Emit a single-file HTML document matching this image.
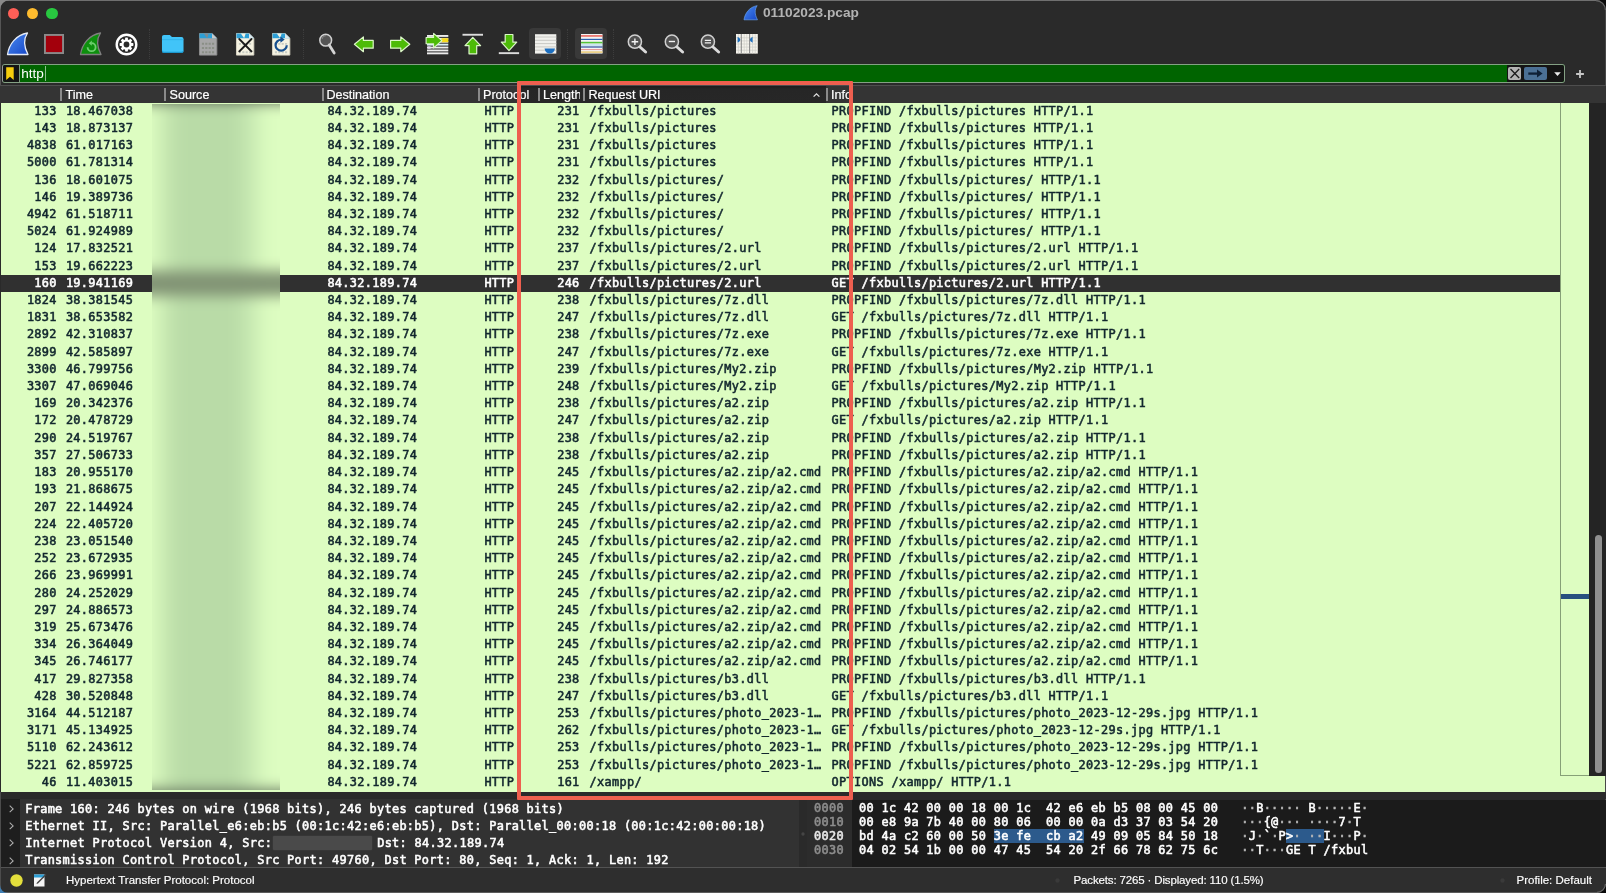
<!DOCTYPE html>
<html lang="en"><head><meta charset="utf-8"><title>01102023.pcap</title>
<style>
html,body{margin:0;padding:0;background:#2a2a2a;}
body{width:1606px;height:893px;overflow:hidden;position:relative;font-family:"Liberation Sans",sans-serif;}
#win{filter:contrast(1);position:absolute;left:0;top:0;width:1606px;height:893px;background:#2a2a2a;overflow:hidden;}
#win *{box-sizing:border-box;}
.abs{position:absolute;}
#topline{position:absolute;left:0;top:0;width:1606px;height:1.2px;background:#707070;}
.tl{position:absolute;top:7.6px;width:11.6px;height:11.6px;border-radius:50%;}
#ledge{position:absolute;left:0;top:0;width:1px;height:102px;background:#555;}
#redge{position:absolute;left:1605px;top:0;width:1px;height:893px;background:#484848;}
.corner{position:absolute;width:10px;height:10px;}
#title{position:absolute;left:763px;top:4.1px;font-size:13.7px;font-weight:bold;color:#b3b3b3;line-height:17px;white-space:nowrap;}
.tsep{position:absolute;top:29px;width:0;height:30px;border-left:1px dotted #3d3d3d;}
.tbtn{position:absolute;top:28.2px;height:31px;border-radius:4px;background:#393939;}
svg{position:absolute;overflow:visible;}
#filter{position:absolute;left:2px;top:64px;width:1563px;height:19px;border:1px solid #84a084;border-left-color:#9a9a9a;border-radius:3px;background:#006400;overflow:hidden;}
#filter .bm{position:absolute;left:0;top:0;width:16px;height:17px;background:#141414;}
#filter .bmsep{position:absolute;left:16px;top:0;width:1px;height:17px;background:#7b9a7b;}
#filter .txt{position:absolute;left:18.2px;top:0;font-size:13.6px;line-height:17px;color:#fff;}
#filter .caret{position:absolute;left:42.3px;top:1px;width:1px;height:15px;background:#8fbf8f;}
#filter .rt{position:absolute;left:1503.5px;top:0;width:60px;height:17px;background:#141414;}
#fx{position:absolute;left:1507.5px;top:67px;width:13.5px;height:13px;background:#b4b4b4;border-radius:2px;}
#fa{position:absolute;left:1523.5px;top:67px;width:23.5px;height:13px;background:#4b7095;border-radius:2px;}
#hline{position:absolute;left:0;top:84.6px;width:1606px;height:1px;background:#4e4e4e;}
#hline2{position:absolute;left:0;top:85.6px;width:1606px;height:1px;background:#1e1e1e;}
#hdr{position:absolute;left:0;top:86px;width:1606px;height:16.8px;background:#343434;color:#fff;font-size:12.6px;}
#hdr .h{-webkit-text-stroke:0.2px;position:absolute;top:0.6px;line-height:16.5px;white-space:nowrap;}
#hdr .s{position:absolute;top:2.2px;width:1.15px;height:12.5px;background:#8a8a8a;margin-left:.4px;}
#list{-webkit-text-stroke:0.55px;position:absolute;left:1px;top:102.8px;width:1604.2px;height:688.8px;background:#ddfdc1;overflow:hidden;font-family:"DejaVu Sans Mono","Liberation Mono",monospace;font-size:11.9px;letter-spacing:0.325px;color:#12272e;}
.r{position:absolute;left:0;width:1559px;height:17.19px;line-height:17.6px;white-space:pre;}
.r.sel{background:#303030;color:#fff;height:17.3px;}
.c{position:absolute;top:0;}
.no{right:1503.2px;}
.tm{left:64.9px;}
.ds{left:326.4px;}
.pr{left:483.4px;}
.ln{right:980.4px;}
.ur{left:588.6px;}
.in{left:830.6px;}
#blur{position:absolute;left:151px;top:1.2px;width:128px;height:685.6px;overflow:hidden;background:#ddfdc1;}
#blur .bi{position:absolute;left:-40px;top:-40px;width:208px;height:766px;background:linear-gradient(90deg,#ddfdc1 38px,#d2f3b9 46px,#c2e3ad 58px,#b9dba7 70px,#b9dba7 122px,#c6e8b1 137px,#d6f7bc 150px,#ddfdc1 160px);filter:blur(7px);}
#blur .bi div{position:absolute;}
#blur .el{position:absolute;top:0;left:0;width:10px;height:100%;background:linear-gradient(90deg,rgba(224,255,197,.25),rgba(224,255,197,0));}
#blur .er{position:absolute;top:0;right:0;width:14px;height:100%;background:linear-gradient(270deg,rgba(224,255,197,.35),rgba(224,255,197,0));}
#mmline{position:absolute;left:1560.2px;top:102.8px;width:29.3px;height:673.2px;border-left:1px solid #86a077;border-bottom:1px solid #86a077;}
#mmmark{position:absolute;left:1561px;top:593.6px;width:28.5px;height:5.2px;background:#27507f;}
#sbtrack{position:absolute;left:1589.3px;top:102.8px;width:16.7px;height:672.8px;background:#242424;}
#sbthumb{position:absolute;left:1594.5px;top:535.3px;width:7.5px;height:238px;border-radius:3.75px;background:#909090;}
#gap{position:absolute;left:0;top:791.6px;width:1606px;height:7.6px;background:#2a2a2a;}
#det{-webkit-text-stroke:0.55px;position:absolute;left:1px;top:799px;width:797.5px;height:67.5px;background:#323232;overflow:hidden;font-family:"DejaVu Sans Mono","Liberation Mono",monospace;font-size:11.9px;letter-spacing:0.325px;color:#fff;}
#det .gut{position:absolute;left:0;top:0;width:18.5px;height:68px;background:#1e1e1e;}
#det .l{position:absolute;left:24.2px;white-space:pre;line-height:17.2px;height:17.2px;}
#det .a{position:absolute;left:7px;color:#bdbdbd;line-height:17.2px;}
#hex{-webkit-text-stroke:0.55px;position:absolute;left:806.5px;top:799.5px;width:799.5px;height:67.5px;background:#1b1b1b;overflow:hidden;font-family:"DejaVu Sans Mono","Liberation Mono",monospace;font-size:11.9px;letter-spacing:0.325px;color:#fff;}
#hex .off{position:absolute;left:0;top:0;width:45px;height:68px;background:#2c2c2c;}
#hex .l{position:absolute;white-space:pre;line-height:14.3px;height:14.3px;}
#hex .o{left:7.5px;color:#8e8e8e;}
#hex .b{left:52.5px;}
#hex .t{left:434.7px;}
#hex i{font-style:normal;color:#b8b8b8;}
#hex .hl{background:#2c5a8c;}
#sline{position:absolute;left:0;top:866.9px;width:1606px;height:1.1px;background:#535353;}
#bline{position:absolute;left:0;top:892px;width:1606px;height:1px;background:#5c5c5c;}
#ledge2{position:absolute;left:0;top:792px;width:1px;height:101px;background:#4c4c4c;}
#status{position:absolute;left:0;top:868px;width:1606px;height:25px;background:#2e2e2e;color:#fff;font-size:11.5px;}
#status .t{-webkit-text-stroke:0.15px;position:absolute;top:0;line-height:25px;white-space:nowrap;}
#redbox{position:absolute;left:517px;top:81.3px;width:336px;height:718.7px;border:4.8px solid #ee5f4f;border-radius:1px;}
#hdark{position:absolute;left:521px;top:0;width:305px;height:16.8px;background:linear-gradient(180deg,#1c1c1c 0,#262626 3px,#272727 100%);}

</style></head><body>
<div id="win">
<div id="topline"></div><div id="ledge"></div><div id="redge"></div>
<svg style="left:1596px;top:0" width="10" height="10" viewBox="0 0 10 10"><path d="M0 0 H10 V10 A10 10 0 0 0 0 0 Z" fill="#0c0c0c"/><path d="M0 0.6 A9.4 9.4 0 0 1 9.4 10" fill="none" stroke="#666" stroke-width="1.2"/></svg>
<svg style="left:0;top:0" width="10" height="10" viewBox="0 0 10 10"><path d="M10 0 H0 V10 A10 10 0 0 1 10 0 Z" fill="#8a8a8a"/></svg>
<div class="tl" style="left:7.6px;background:#ff5f57"></div>
<div class="tl" style="left:26.9px;background:#febc2e"></div>
<div class="tl" style="left:46.2px;background:#28c840"></div>
<svg style="left:742.9px;top:4.6px" width="15.8" height="15.8" viewBox="0 0 24 24"><defs><linearGradient id="gb" x1="0" y1="0" x2="1" y2="1"><stop offset="0" stop-color="#4a8cf0"/><stop offset="1" stop-color="#1747c8"/></linearGradient></defs><path d="M1.5 22.5 C3 12 10 3 21.5 1 C17.5 7 17.5 14 22 22.5 Z" fill="url(#gb)" stroke="#6aa5f5" stroke-width="1"/></svg>
<div id="title">01102023.pcap</div>

<!-- toolbar -->
<svg style="left:6px;top:32px" width="24" height="24" viewBox="0 0 24 24"><path d="M1.5 22.5 C3 12 10 3 21.5 1 C17.5 7 17.5 14 22 22.5 Z" fill="url(#gb)" stroke="#e6ecf7" stroke-width="1.3" stroke-linejoin="round"/></svg>
<svg style="left:44px;top:34px" width="20" height="20" viewBox="0 0 21 21"><rect x="1" y="1" width="19" height="19" fill="#a3000c" stroke="#8a8a8a" stroke-width="2"/></svg>
<svg style="left:79px;top:32px" width="24" height="24" viewBox="0 0 24 24"><path d="M1.5 22.5 C3 12 10 3 21.5 1 C17.5 7 17.5 14 22 22.5 Z" fill="#0d8f0d" stroke="#808080" stroke-width="1.3" stroke-linejoin="round"/><path d="M8.6 15.2 a4 4 0 1 0 4 -4" fill="none" stroke="#6fce6f" stroke-width="1.8"/><path d="M12.8 8.6 l-3 2.6 l3 2.6 z" fill="#6fce6f"/></svg>
<svg style="left:115px;top:33px" width="23" height="23" viewBox="0 0 23 23"><circle cx="11.5" cy="11.5" r="9.8" fill="none" stroke="#fff" stroke-width="2.4"/><g fill="#fff"><circle cx="11.5" cy="11.5" r="5.2"/><g id="teeth"><rect x="10.1" y="4.6" width="2.8" height="13.8" rx="0.6"/><rect x="10.1" y="4.6" width="2.8" height="13.8" rx="0.6" transform="rotate(45 11.5 11.5)"/><rect x="10.1" y="4.6" width="2.8" height="13.8" rx="0.6" transform="rotate(90 11.5 11.5)"/><rect x="10.1" y="4.6" width="2.8" height="13.8" rx="0.6" transform="rotate(135 11.5 11.5)"/></g></g><circle cx="11.5" cy="11.5" r="2.9" fill="#2a2a2a"/></svg>
<div class="tsep" style="left:149px"></div>
<svg style="left:160.7px;top:33.8px" width="23.5" height="19.8" viewBox="0 0 24 21" preserveAspectRatio="none"><path d="M1 3 a2 2 0 0 1 2 -2 h6 l2.2 2.3 H21 a2 2 0 0 1 2 2 V18 a2 2 0 0 1 -2 2 H3 a2 2 0 0 1 -2 -2 Z" fill="#41c4f8"/><path d="M1 17 v1 a2 2 0 0 0 2 2 h18 a2 2 0 0 0 2 -2 v-1 a2 2 0 0 1 -2 1.7 H3 a2 2 0 0 1 -2 -1.7z" fill="#1596cf"/><path d="M1 6 h22" stroke="#2aaee6" stroke-width="0.8"/></svg>
<svg style="left:199.4px;top:32.5px" width="18.3" height="22.6" viewBox="0 0 19 24" preserveAspectRatio="none"><path d="M0.5 0.5 H13.5 L18.5 5.5 V23.5 H0.5 Z" fill="#a6a6a6" stroke="#8d8d8d"/><path d="M0.5 0.5 H13.5 L18.5 5.5 H0.5 Z" fill="#2d9fd6"/><path d="M5 0.5 L8.5 5.5 L10 0.5z" fill="#7f8a90"/><path d="M13.5 0.5 V5.5 H18.5 Z" fill="#c9c9c9"/><g stroke="#8a8f86" stroke-width="2.2" stroke-dasharray="2.2 1.3"><path d="M3 11.5 H16"/><path d="M3 16 H16"/><path d="M3 20.5 H16"/></g></svg>
<svg style="left:235.6px;top:32.5px" width="18.3" height="22.6" viewBox="0 0 19 24" preserveAspectRatio="none"><path d="M0.5 0.5 H13.5 L18.5 5.5 V23.5 H0.5 Z" fill="#f6f3e2" stroke="#d8d5c4"/><path d="M0.5 0.5 H13.5 L18.5 5.5 H0.5 Z" fill="#2d9fd6"/><path d="M5 0.5 L8.5 5.5 L10 0.5z" fill="#f6f3e2"/><path d="M13.5 0.5 V5.5 H18.5 Z" fill="#dfe9ee"/><g stroke="#c9cdc4" stroke-width="2" stroke-dasharray="2.2 1.3"><path d="M3 11.5 H16"/><path d="M3 20.5 H16"/></g><path d="M3.5 6.5 L16 19.5 M16 6.5 L3.5 19.5" stroke="#1b1b1b" stroke-width="2.2" stroke-linecap="round"/></svg>
<svg style="left:272.2px;top:32.5px" width="18.3" height="22.6" viewBox="0 0 19 24" preserveAspectRatio="none"><path d="M0.5 0.5 H13.5 L18.5 5.5 V23.5 H0.5 Z" fill="#f6f3e2" stroke="#d8d5c4"/><path d="M0.5 0.5 H13.5 L18.5 5.5 H0.5 Z" fill="#2d9fd6"/><path d="M5 0.5 L8.5 5.5 L10 0.5z" fill="#f6f3e2"/><path d="M13.5 0.5 V5.5 H18.5 Z" fill="#dfe9ee"/><g stroke="#c9cdc4" stroke-width="2" stroke-dasharray="2.2 1.3"><path d="M3 11.5 H16"/><path d="M3 20.5 H16"/></g><path d="M9.5 7.2 A5.8 5.8 0 1 0 15.3 13" fill="none" stroke="#17508f" stroke-width="2.3"/><path d="M8.6 3.8 L13.2 7 L8.8 10.4 Z" fill="#17508f"/></svg>
<div class="tsep" style="left:303px"></div>
<svg style="left:316px;top:31px" width="24" height="26" viewBox="0 0 24 26"><circle cx="9.7" cy="9.2" r="5.9" fill="#555" stroke="#d0d0d0" stroke-width="1.5"/><path d="M6 8 a4 4 0 0 1 4 -3.4" fill="none" stroke="#8a8a8a" stroke-width="1"/><path d="M13.2 14 L18.2 22" stroke="#d4d4d4" stroke-width="2.8" stroke-linecap="round"/></svg>
<svg style="left:353px;top:34.5px" width="22" height="19" viewBox="0 0 22 19"><path d="M1.4 9.3 L10.4 1.9 V5.4 H20.2 V13.2 H10.4 V16.7 Z" fill="#4dbb08" stroke="#dcf7c8" stroke-width="1.2" stroke-linejoin="round"/></svg>
<svg style="left:389px;top:34.5px" width="22" height="19" viewBox="0 0 22 19"><path d="M20.8 9.3 L11.8 1.9 V5.4 H1.6 V13.2 H11.8 V16.7 Z" fill="#4dbb08" stroke="#dcf7c8" stroke-width="1.2" stroke-linejoin="round"/></svg>
<svg style="left:425px;top:32px" width="24" height="24" viewBox="0 0 24 24"><g fill="#ececec"><rect x="2" y="3" width="21.3" height="1.9"/><rect x="2" y="5.9" width="21.3" height="1.9"/><rect x="2" y="8.8" width="21.3" height="1.9"/><rect x="2" y="11.7" width="21.3" height="1.9" fill="#d9f0f8"/><rect x="2" y="14.6" width="21.3" height="1.9"/><rect x="2" y="17.5" width="21.3" height="1.9"/><rect x="2" y="20.4" width="21.3" height="1.9"/></g><rect x="2.6" y="14.4" width="3" height="2.3" fill="#e8dcf5"/><rect x="16.5" y="6.2" width="6.8" height="4" fill="#f7da1c"/><path d="M16.9 8.6 L8.6 1.4 V5.5 H1.1 V11.8 H8.6 V15.9 Z" fill="#4dbb08" stroke="#dcf7c8" stroke-width="1.1" stroke-linejoin="round"/></svg>
<svg style="left:461px;top:32px" width="24" height="24" viewBox="0 0 24 24"><rect x="1.5" y="1.8" width="20.5" height="1.9" fill="#dcdcdc"/><path d="M11.8 5.4 L19.6 13.6 H15.7 V21.8 H8 V13.6 H4 Z" fill="#4dbb08" stroke="#dcf7c8" stroke-width="1.2" stroke-linejoin="round"/></svg>
<svg style="left:497px;top:32px" width="24" height="24" viewBox="0 0 24 24"><rect x="1.8" y="20.2" width="20.3" height="1.9" fill="#dcdcdc"/><path d="M12 18.6 L19.7 10.2 H15.9 V2.5 H8.2 V10.2 H4.3 Z" fill="#4dbb08" stroke="#dcf7c8" stroke-width="1.2" stroke-linejoin="round"/></svg>
<div class="tbtn" style="left:529.2px;width:32px"></div>
<svg style="left:535px;top:34px" width="22" height="20" viewBox="0 0 22 20"><rect x="0" y="0.2" width="21.3" height="19.4" fill="#f1f1ed"/><path d="M0 3H21.3M0 6.3H21.3M0 9.6H21.3M0 12.9H21.3M0 16.2H21.3" stroke="#c4c4c0" stroke-width="0.9"/><path d="M9.5 14.6 H20 Q19 19.6 14.8 19.6 Q10.5 19.6 9.5 14.6 Z" fill="#1c6fc0"/></svg>
<div class="tsep" style="left:567px"></div>
<div class="tbtn" style="left:575.2px;width:32px"></div>
<svg style="left:581px;top:34px" width="22" height="20" viewBox="0 0 22 20"><rect x="0" y="0" width="21.5" height="19.6" fill="#f4f4f4"/><rect x="0" y="1.3" width="21.5" height="1.3" fill="#e8493f"/><rect x="0" y="4.8" width="21.5" height="1.2" fill="#2c5fb0"/><rect x="0" y="7.8" width="21.5" height="1.6" fill="#53c23a"/><rect x="0" y="10.5" width="21.5" height="1" fill="#9fd8f0"/><rect x="0" y="12.4" width="21.5" height="1.2" fill="#2a4f9c"/><rect x="0" y="15" width="21.5" height="1.1" fill="#e79a9a"/><rect x="0" y="17.2" width="21.5" height="1.8" fill="#ecd28a"/></svg>
<div class="tsep" style="left:613px"></div>
<svg style="left:625px;top:31px" width="26" height="26" viewBox="0 0 26 26"><circle cx="9.9" cy="10.7" r="6.6" fill="#505050" stroke="#d0d0d0" stroke-width="1.5"/><path d="M6.6 10.7 H13.2 M9.9 7.4 V14" stroke="#f2f2f2" stroke-width="1.4"/><path d="M15 16 L20.6 21" stroke="#dadada" stroke-width="3" stroke-linecap="round"/></svg>
<svg style="left:661.5px;top:31px" width="26" height="26" viewBox="0 0 26 26"><circle cx="9.9" cy="10.7" r="6.6" fill="#505050" stroke="#d0d0d0" stroke-width="1.5"/><path d="M6.8 10.5 H13" stroke="#f2f2f2" stroke-width="1.4"/><path d="M15 16 L20.6 21" stroke="#dadada" stroke-width="3" stroke-linecap="round"/></svg>
<svg style="left:698px;top:31px" width="26" height="26" viewBox="0 0 26 26"><circle cx="9.9" cy="10.7" r="6.6" fill="#505050" stroke="#d0d0d0" stroke-width="1.5"/><path d="M6.8 9.4 H13 M6.8 11.9 H13" stroke="#f2f2f2" stroke-width="1.2"/><path d="M15 16 L20.6 21" stroke="#dadada" stroke-width="3" stroke-linecap="round"/></svg>
<svg style="left:736px;top:34px" width="22" height="20" viewBox="0 0 22 20"><rect x="0" y="0" width="21.8" height="19.6" fill="#f5f3ec"/><g stroke="#cfcfc8" stroke-width="0.7"><path d="M0 3.8H22M0 6.9H22M0 10H22M0 13.1H22M0 16.2H22"/><path d="M2.4 0V19.6M8.2 0V19.6M10.8 0V19.6M16.6 0V19.6M19.2 0V19.6"/></g><path d="M5.3 0V19.6M13.6 0V19.6" stroke="#8c8c8c" stroke-width="1.1"/><path d="M1.6 2.8 Q7.2 5.8 1.6 8.8Z M16.6 2.8 Q11 5.8 16.6 8.8Z" fill="#1e6fbe"/></svg>

<!-- filter bar -->
<div id="filter"><div class="bm"></div><div class="bmsep"></div><div class="txt">http</div><div class="caret"></div><div class="rt"></div></div>
<svg style="left:6px;top:67px" width="8" height="13.5" viewBox="0 0 8 13.5"><path d="M0.2 0.2 H7.7 V13 L4 9.8 L0.2 13 Z" fill="#f7cd0c"/></svg>
<div id="fx"></div>
<svg style="left:1507.5px;top:67px" width="14" height="13" viewBox="0 0 14 13"><path d="M2.5 2 L11.2 11 M11.2 2 L2.5 11" stroke="#1c1c1c" stroke-width="1.3"/></svg>
<div id="fa"></div>
<svg style="left:1523.5px;top:67px" width="24" height="13" viewBox="0 0 24 13"><path d="M4.3 6.6 H14" stroke="#0f2036" stroke-width="2.3"/><path d="M13 2.6 L18.6 6.6 L13 10.6 Z" fill="#0f2036"/></svg>
<svg style="left:1553.5px;top:72px" width="7" height="4" viewBox="0 0 7 4"><path d="M0.2 0.2 H6.8 L3.5 3.9 Z" fill="#ececec"/></svg>
<svg style="left:1575.8px;top:70px" width="8" height="8" viewBox="0 0 8 8"><path d="M4 0.1 V7.9 M0.1 4 H7.9" stroke="#c6c6c6" stroke-width="1.8"/></svg>
<div id="hline"></div><div id="hline2"></div>

<!-- header -->
<div id="hdr">
<div id="hdark"></div>
<div class="s" style="left:60px"></div><div class="h" style="left:65.5px">Time</div>
<div class="s" style="left:164px"></div><div class="h" style="left:169.5px">Source</div>
<div class="s" style="left:322px"></div><div class="h" style="left:326.4px">Destination</div>
<div class="s" style="left:478px"></div><div class="h" style="left:483px">Protocol</div>
<div class="s" style="left:538px"></div><div class="h" style="left:543px;width:37px;overflow:hidden">Length</div>
<div class="s" style="left:583px"></div><div class="h" style="left:588.5px">Request URI</div>
<svg style="left:812.5px;top:6.5px" width="7" height="4" viewBox="0 0 7 4"><path d="M0.6 3.6 L3.5 0.8 L6.4 3.6" fill="none" stroke="#e0e0e0" stroke-width="1.3"/></svg>
<div class="s" style="left:826px"></div><div class="h" style="left:831px">Info</div>
</div>
<div id="list">
<div class="r" style="top:0.00px"><span class="c no">133</span><span class="c tm">18.467038</span><span class="c ds">84.32.189.74</span><span class="c pr">HTTP</span><span class="c ln">231</span><span class="c ur">/fxbulls/pictures</span><span class="c in">PROPFIND /fxbulls/pictures HTTP/1.1</span></div>
<div class="r" style="top:17.20px"><span class="c no">143</span><span class="c tm">18.873137</span><span class="c ds">84.32.189.74</span><span class="c pr">HTTP</span><span class="c ln">231</span><span class="c ur">/fxbulls/pictures</span><span class="c in">PROPFIND /fxbulls/pictures HTTP/1.1</span></div>
<div class="r" style="top:34.41px"><span class="c no">4838</span><span class="c tm">61.017163</span><span class="c ds">84.32.189.74</span><span class="c pr">HTTP</span><span class="c ln">231</span><span class="c ur">/fxbulls/pictures</span><span class="c in">PROPFIND /fxbulls/pictures HTTP/1.1</span></div>
<div class="r" style="top:51.61px"><span class="c no">5000</span><span class="c tm">61.781314</span><span class="c ds">84.32.189.74</span><span class="c pr">HTTP</span><span class="c ln">231</span><span class="c ur">/fxbulls/pictures</span><span class="c in">PROPFIND /fxbulls/pictures HTTP/1.1</span></div>
<div class="r" style="top:68.82px"><span class="c no">136</span><span class="c tm">18.601075</span><span class="c ds">84.32.189.74</span><span class="c pr">HTTP</span><span class="c ln">232</span><span class="c ur">/fxbulls/pictures/</span><span class="c in">PROPFIND /fxbulls/pictures/ HTTP/1.1</span></div>
<div class="r" style="top:86.02px"><span class="c no">146</span><span class="c tm">19.389736</span><span class="c ds">84.32.189.74</span><span class="c pr">HTTP</span><span class="c ln">232</span><span class="c ur">/fxbulls/pictures/</span><span class="c in">PROPFIND /fxbulls/pictures/ HTTP/1.1</span></div>
<div class="r" style="top:103.23px"><span class="c no">4942</span><span class="c tm">61.518711</span><span class="c ds">84.32.189.74</span><span class="c pr">HTTP</span><span class="c ln">232</span><span class="c ur">/fxbulls/pictures/</span><span class="c in">PROPFIND /fxbulls/pictures/ HTTP/1.1</span></div>
<div class="r" style="top:120.43px"><span class="c no">5024</span><span class="c tm">61.924989</span><span class="c ds">84.32.189.74</span><span class="c pr">HTTP</span><span class="c ln">232</span><span class="c ur">/fxbulls/pictures/</span><span class="c in">PROPFIND /fxbulls/pictures/ HTTP/1.1</span></div>
<div class="r" style="top:137.64px"><span class="c no">124</span><span class="c tm">17.832521</span><span class="c ds">84.32.189.74</span><span class="c pr">HTTP</span><span class="c ln">237</span><span class="c ur">/fxbulls/pictures/2.url</span><span class="c in">PROPFIND /fxbulls/pictures/2.url HTTP/1.1</span></div>
<div class="r" style="top:154.84px"><span class="c no">153</span><span class="c tm">19.662223</span><span class="c ds">84.32.189.74</span><span class="c pr">HTTP</span><span class="c ln">237</span><span class="c ur">/fxbulls/pictures/2.url</span><span class="c in">PROPFIND /fxbulls/pictures/2.url HTTP/1.1</span></div>
<div class="r sel" style="top:172.05px"><span class="c no">160</span><span class="c tm">19.941169</span><span class="c ds">84.32.189.74</span><span class="c pr">HTTP</span><span class="c ln">246</span><span class="c ur">/fxbulls/pictures/2.url</span><span class="c in">GET /fxbulls/pictures/2.url HTTP/1.1</span></div>
<div class="r" style="top:189.25px"><span class="c no">1824</span><span class="c tm">38.381545</span><span class="c ds">84.32.189.74</span><span class="c pr">HTTP</span><span class="c ln">238</span><span class="c ur">/fxbulls/pictures/7z.dll</span><span class="c in">PROPFIND /fxbulls/pictures/7z.dll HTTP/1.1</span></div>
<div class="r" style="top:206.46px"><span class="c no">1831</span><span class="c tm">38.653582</span><span class="c ds">84.32.189.74</span><span class="c pr">HTTP</span><span class="c ln">247</span><span class="c ur">/fxbulls/pictures/7z.dll</span><span class="c in">GET /fxbulls/pictures/7z.dll HTTP/1.1</span></div>
<div class="r" style="top:223.66px"><span class="c no">2892</span><span class="c tm">42.310837</span><span class="c ds">84.32.189.74</span><span class="c pr">HTTP</span><span class="c ln">238</span><span class="c ur">/fxbulls/pictures/7z.exe</span><span class="c in">PROPFIND /fxbulls/pictures/7z.exe HTTP/1.1</span></div>
<div class="r" style="top:240.87px"><span class="c no">2899</span><span class="c tm">42.585897</span><span class="c ds">84.32.189.74</span><span class="c pr">HTTP</span><span class="c ln">247</span><span class="c ur">/fxbulls/pictures/7z.exe</span><span class="c in">GET /fxbulls/pictures/7z.exe HTTP/1.1</span></div>
<div class="r" style="top:258.07px"><span class="c no">3300</span><span class="c tm">46.799756</span><span class="c ds">84.32.189.74</span><span class="c pr">HTTP</span><span class="c ln">239</span><span class="c ur">/fxbulls/pictures/My2.zip</span><span class="c in">PROPFIND /fxbulls/pictures/My2.zip HTTP/1.1</span></div>
<div class="r" style="top:275.28px"><span class="c no">3307</span><span class="c tm">47.069046</span><span class="c ds">84.32.189.74</span><span class="c pr">HTTP</span><span class="c ln">248</span><span class="c ur">/fxbulls/pictures/My2.zip</span><span class="c in">GET /fxbulls/pictures/My2.zip HTTP/1.1</span></div>
<div class="r" style="top:292.48px"><span class="c no">169</span><span class="c tm">20.342376</span><span class="c ds">84.32.189.74</span><span class="c pr">HTTP</span><span class="c ln">238</span><span class="c ur">/fxbulls/pictures/a2.zip</span><span class="c in">PROPFIND /fxbulls/pictures/a2.zip HTTP/1.1</span></div>
<div class="r" style="top:309.69px"><span class="c no">172</span><span class="c tm">20.478729</span><span class="c ds">84.32.189.74</span><span class="c pr">HTTP</span><span class="c ln">247</span><span class="c ur">/fxbulls/pictures/a2.zip</span><span class="c in">GET /fxbulls/pictures/a2.zip HTTP/1.1</span></div>
<div class="r" style="top:326.89px"><span class="c no">290</span><span class="c tm">24.519767</span><span class="c ds">84.32.189.74</span><span class="c pr">HTTP</span><span class="c ln">238</span><span class="c ur">/fxbulls/pictures/a2.zip</span><span class="c in">PROPFIND /fxbulls/pictures/a2.zip HTTP/1.1</span></div>
<div class="r" style="top:344.10px"><span class="c no">357</span><span class="c tm">27.506733</span><span class="c ds">84.32.189.74</span><span class="c pr">HTTP</span><span class="c ln">238</span><span class="c ur">/fxbulls/pictures/a2.zip</span><span class="c in">PROPFIND /fxbulls/pictures/a2.zip HTTP/1.1</span></div>
<div class="r" style="top:361.30px"><span class="c no">183</span><span class="c tm">20.955170</span><span class="c ds">84.32.189.74</span><span class="c pr">HTTP</span><span class="c ln">245</span><span class="c ur">/fxbulls/pictures/a2.zip/a2.cmd</span><span class="c in">PROPFIND /fxbulls/pictures/a2.zip/a2.cmd HTTP/1.1</span></div>
<div class="r" style="top:378.51px"><span class="c no">193</span><span class="c tm">21.868675</span><span class="c ds">84.32.189.74</span><span class="c pr">HTTP</span><span class="c ln">245</span><span class="c ur">/fxbulls/pictures/a2.zip/a2.cmd</span><span class="c in">PROPFIND /fxbulls/pictures/a2.zip/a2.cmd HTTP/1.1</span></div>
<div class="r" style="top:395.71px"><span class="c no">207</span><span class="c tm">22.144924</span><span class="c ds">84.32.189.74</span><span class="c pr">HTTP</span><span class="c ln">245</span><span class="c ur">/fxbulls/pictures/a2.zip/a2.cmd</span><span class="c in">PROPFIND /fxbulls/pictures/a2.zip/a2.cmd HTTP/1.1</span></div>
<div class="r" style="top:412.92px"><span class="c no">224</span><span class="c tm">22.405720</span><span class="c ds">84.32.189.74</span><span class="c pr">HTTP</span><span class="c ln">245</span><span class="c ur">/fxbulls/pictures/a2.zip/a2.cmd</span><span class="c in">PROPFIND /fxbulls/pictures/a2.zip/a2.cmd HTTP/1.1</span></div>
<div class="r" style="top:430.12px"><span class="c no">238</span><span class="c tm">23.051540</span><span class="c ds">84.32.189.74</span><span class="c pr">HTTP</span><span class="c ln">245</span><span class="c ur">/fxbulls/pictures/a2.zip/a2.cmd</span><span class="c in">PROPFIND /fxbulls/pictures/a2.zip/a2.cmd HTTP/1.1</span></div>
<div class="r" style="top:447.33px"><span class="c no">252</span><span class="c tm">23.672935</span><span class="c ds">84.32.189.74</span><span class="c pr">HTTP</span><span class="c ln">245</span><span class="c ur">/fxbulls/pictures/a2.zip/a2.cmd</span><span class="c in">PROPFIND /fxbulls/pictures/a2.zip/a2.cmd HTTP/1.1</span></div>
<div class="r" style="top:464.53px"><span class="c no">266</span><span class="c tm">23.969991</span><span class="c ds">84.32.189.74</span><span class="c pr">HTTP</span><span class="c ln">245</span><span class="c ur">/fxbulls/pictures/a2.zip/a2.cmd</span><span class="c in">PROPFIND /fxbulls/pictures/a2.zip/a2.cmd HTTP/1.1</span></div>
<div class="r" style="top:481.74px"><span class="c no">280</span><span class="c tm">24.252029</span><span class="c ds">84.32.189.74</span><span class="c pr">HTTP</span><span class="c ln">245</span><span class="c ur">/fxbulls/pictures/a2.zip/a2.cmd</span><span class="c in">PROPFIND /fxbulls/pictures/a2.zip/a2.cmd HTTP/1.1</span></div>
<div class="r" style="top:498.94px"><span class="c no">297</span><span class="c tm">24.886573</span><span class="c ds">84.32.189.74</span><span class="c pr">HTTP</span><span class="c ln">245</span><span class="c ur">/fxbulls/pictures/a2.zip/a2.cmd</span><span class="c in">PROPFIND /fxbulls/pictures/a2.zip/a2.cmd HTTP/1.1</span></div>
<div class="r" style="top:516.15px"><span class="c no">319</span><span class="c tm">25.673476</span><span class="c ds">84.32.189.74</span><span class="c pr">HTTP</span><span class="c ln">245</span><span class="c ur">/fxbulls/pictures/a2.zip/a2.cmd</span><span class="c in">PROPFIND /fxbulls/pictures/a2.zip/a2.cmd HTTP/1.1</span></div>
<div class="r" style="top:533.35px"><span class="c no">334</span><span class="c tm">26.364049</span><span class="c ds">84.32.189.74</span><span class="c pr">HTTP</span><span class="c ln">245</span><span class="c ur">/fxbulls/pictures/a2.zip/a2.cmd</span><span class="c in">PROPFIND /fxbulls/pictures/a2.zip/a2.cmd HTTP/1.1</span></div>
<div class="r" style="top:550.56px"><span class="c no">345</span><span class="c tm">26.746177</span><span class="c ds">84.32.189.74</span><span class="c pr">HTTP</span><span class="c ln">245</span><span class="c ur">/fxbulls/pictures/a2.zip/a2.cmd</span><span class="c in">PROPFIND /fxbulls/pictures/a2.zip/a2.cmd HTTP/1.1</span></div>
<div class="r" style="top:567.76px"><span class="c no">417</span><span class="c tm">29.827358</span><span class="c ds">84.32.189.74</span><span class="c pr">HTTP</span><span class="c ln">238</span><span class="c ur">/fxbulls/pictures/b3.dll</span><span class="c in">PROPFIND /fxbulls/pictures/b3.dll HTTP/1.1</span></div>
<div class="r" style="top:584.97px"><span class="c no">428</span><span class="c tm">30.520848</span><span class="c ds">84.32.189.74</span><span class="c pr">HTTP</span><span class="c ln">247</span><span class="c ur">/fxbulls/pictures/b3.dll</span><span class="c in">GET /fxbulls/pictures/b3.dll HTTP/1.1</span></div>
<div class="r" style="top:602.17px"><span class="c no">3164</span><span class="c tm">44.512187</span><span class="c ds">84.32.189.74</span><span class="c pr">HTTP</span><span class="c ln">253</span><span class="c ur">/fxbulls/pictures/photo_2023-1…</span><span class="c in">PROPFIND /fxbulls/pictures/photo_2023-12-29s.jpg HTTP/1.1</span></div>
<div class="r" style="top:619.38px"><span class="c no">3171</span><span class="c tm">45.134925</span><span class="c ds">84.32.189.74</span><span class="c pr">HTTP</span><span class="c ln">262</span><span class="c ur">/fxbulls/pictures/photo_2023-1…</span><span class="c in">GET /fxbulls/pictures/photo_2023-12-29s.jpg HTTP/1.1</span></div>
<div class="r" style="top:636.58px"><span class="c no">5110</span><span class="c tm">62.243612</span><span class="c ds">84.32.189.74</span><span class="c pr">HTTP</span><span class="c ln">253</span><span class="c ur">/fxbulls/pictures/photo_2023-1…</span><span class="c in">PROPFIND /fxbulls/pictures/photo_2023-12-29s.jpg HTTP/1.1</span></div>
<div class="r" style="top:653.79px"><span class="c no">5221</span><span class="c tm">62.859725</span><span class="c ds">84.32.189.74</span><span class="c pr">HTTP</span><span class="c ln">253</span><span class="c ur">/fxbulls/pictures/photo_2023-1…</span><span class="c in">PROPFIND /fxbulls/pictures/photo_2023-12-29s.jpg HTTP/1.1</span></div>
<div class="r" style="top:670.99px"><span class="c no">46</span><span class="c tm">11.403015</span><span class="c ds">84.32.189.74</span><span class="c pr">HTTP</span><span class="c ln">161</span><span class="c ur">/xampp/</span><span class="c in">OPTIONS /xampp/ HTTP/1.1</span></div>
<div id="blur"><div class="bi"><div style="left:0;top:0;width:208px;height:39px;background:#55614f"></div><div style="left:0;top:207px;width:208px;height:25px;background:#819374"></div><div style="left:0;top:725px;width:208px;height:44px;background:#6f8066"></div></div></div>
</div>
<div id="mmline"></div>
<div id="mmmark"></div>
<div id="sbtrack"></div>
<div id="sbthumb"></div>
<div id="gap"></div>
<div id="det"><div class="gut"></div>
<svg style="left:8.3px;top:6px" width="5.2" height="7.8" viewBox="0 0 6 9"><path d="M0.8 0.8 L4.8 4.5 L0.8 8.2" fill="none" stroke="#b0b0b0" stroke-width="1.2"/></svg>
<svg style="left:8.3px;top:23.1px" width="5.2" height="7.8" viewBox="0 0 6 9"><path d="M0.8 0.8 L4.8 4.5 L0.8 8.2" fill="none" stroke="#b0b0b0" stroke-width="1.2"/></svg>
<svg style="left:8.3px;top:40.4px" width="5.2" height="7.8" viewBox="0 0 6 9"><path d="M0.8 0.8 L4.8 4.5 L0.8 8.2" fill="none" stroke="#b0b0b0" stroke-width="1.2"/></svg>
<svg style="left:8.3px;top:57.5px" width="5.2" height="7.8" viewBox="0 0 6 9"><path d="M0.8 0.8 L4.8 4.5 L0.8 8.2" fill="none" stroke="#b0b0b0" stroke-width="1.2"/></svg>
<div class="l" style="top:1.5px">Frame 160: 246 bytes on wire (1968 bits), 246 bytes captured (1968 bits)</div>
<div class="l" style="top:18.5px">Ethernet II, Src: Parallel_e6:eb:b5 (00:1c:42:e6:eb:b5), Dst: Parallel_00:00:18 (00:1c:42:00:00:18)</div>
<div class="l" style="top:35.9px">Internet Protocol Version 4, Src:<span style="display:inline-block;width:99px;height:14px;vertical-align:-3px;background:#4a4a4a;margin:0 5.5px 0 0.5px;border-radius:1px;box-shadow:0 0 1.5px #4a4a4a"></span>Dst: 84.32.189.74</div>
<div class="l" style="top:53px">Transmission Control Protocol, Src Port: 49760, Dst Port: 80, Seq: 1, Ack: 1, Len: 192</div>
</div>
<svg style="left:800.5px;top:831.5px" width="4" height="4" viewBox="0 0 4 4"><circle cx="2" cy="2" r="1.7" fill="#454545"/></svg>
<div id="hex"><div class="off"></div>
<div class="l o" style="top:1px">0000</div><div class="l b" style="top:1px">00 1c 42 00 00 18 00 1c  42 e6 eb b5 08 00 45 00</div><div class="l t" style="top:1px"><i>··</i>B<i>·····</i> B<i>·····</i>E<i>·</i></div>
<div class="l o" style="top:15.3px">0010</div><div class="l b" style="top:15.3px">00 e8 9a 7b 40 00 80 06  00 00 0a d3 37 03 54 20</div><div class="l t" style="top:15.3px"><i>···</i>{@<i>···</i> <i>····</i>7<i>·</i>T </div>
<div class="l o" style="top:29.6px;color:#e8e8e8">0020</div><div class="l b" style="top:29.6px">bd 4a c2 60 00 50 <span class="hl">3e fe  cb a2</span> 49 09 05 84 50 18</div><div class="l t" style="top:29.6px"><i>·</i>J<i>·</i>`<i>·</i>P<span class="hl">&gt;<i>·</i> <i>··</i></span>I<i>···</i>P<i>·</i></div>
<div class="l o" style="top:43.9px">0030</div><div class="l b" style="top:43.9px">04 02 54 1b 00 00 47 45  54 20 2f 66 78 62 75 6c</div><div class="l t" style="top:43.9px"><i>··</i>T<i>···</i>GE T /fxbul</div>
</div>
<div id="sline"></div>
<div id="status">
<svg style="left:10px;top:5.5px" width="13" height="13" viewBox="0 0 13 13"><circle cx="6.5" cy="6.5" r="6.2" fill="#e3df3c"/></svg>
<svg style="left:33px;top:5px" width="14" height="14" viewBox="0 0 14 14"><rect x="1" y="1.5" width="10.5" height="12" fill="#f4f4f4"/><rect x="1" y="1.5" width="10.5" height="3" fill="#2d9fd6"/><path d="M4 9.5 L12.5 1 L13.5 2 L5 10.5 L3.4 11 Z" fill="#444"/></svg>
<div class="t" style="left:66px">Hypertext Transfer Protocol: Protocol</div>
<svg style="left:1055px;top:10px" width="5" height="5" viewBox="0 0 5 5"><circle cx="2.5" cy="2.5" r="2.2" fill="#3a3a3a"/></svg>
<div class="t" style="left:1073.5px;letter-spacing:-0.145px">Packets: 7265 · Displayed: 110 (1.5%)</div>
<svg style="left:1500px;top:10px" width="5" height="5" viewBox="0 0 5 5"><circle cx="2.5" cy="2.5" r="2.2" fill="#3a3a3a"/></svg>
<div class="t" style="left:1516.5px">Profile: Default</div>
</div>
<div id="bline"></div><div id="ledge2"></div>
<svg style="left:0;top:885px" width="8" height="8" viewBox="0 0 8 8"><path d="M0 0 V8 H8 A8 8 0 0 1 0 0 Z" fill="#3f7eb3"/></svg>
<svg style="left:1597px;top:884px" width="9" height="9" viewBox="0 0 9 9"><path d="M9 0 V9 H0 A9 9 0 0 0 9 0 Z" fill="#0b0b0b"/><path d="M8.4 0 A8.4 8.4 0 0 1 0 8.4" fill="none" stroke="#6a6a6a" stroke-width="1.1"/></svg>
<div id="redbox"></div>
</div>
</body></html>
